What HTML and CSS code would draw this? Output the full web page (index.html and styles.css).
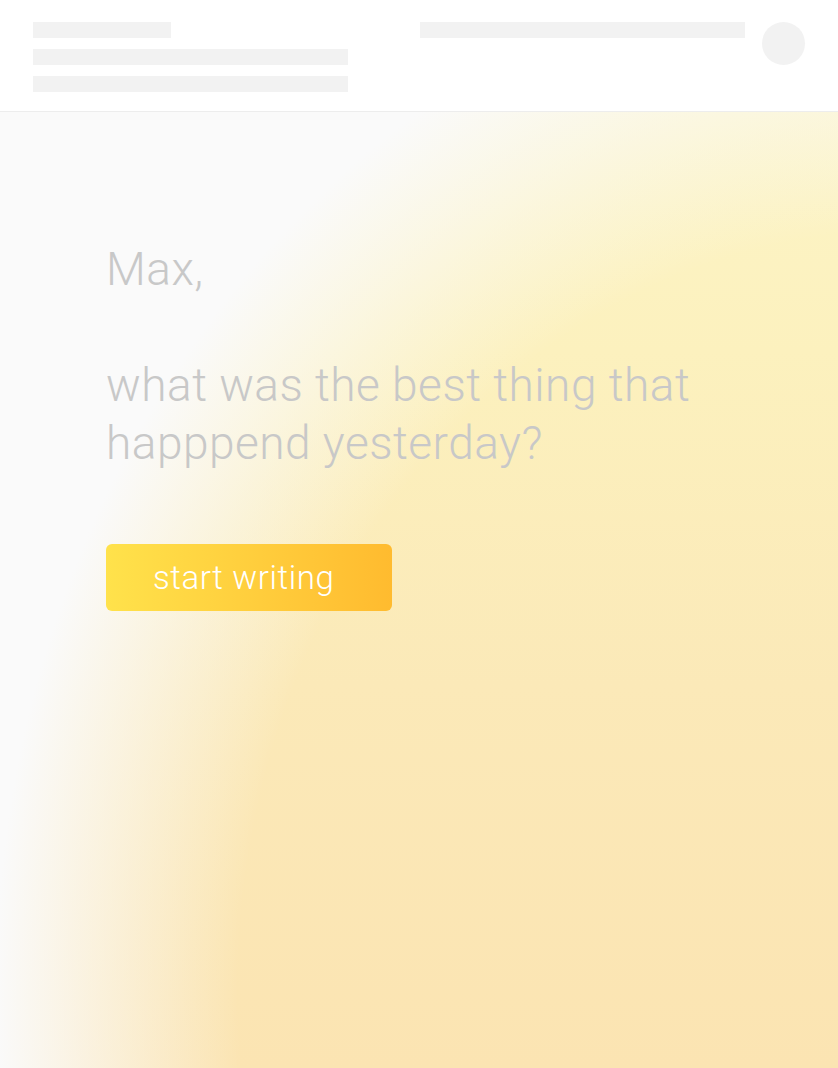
FILE: index.html
```html
<!DOCTYPE html>
<html lang="en">
<head>
<meta charset="utf-8">
<title>Journal</title>
<link rel="stylesheet" href="styles.css">
</head>
<body>
<header class="topbar">
  <div class="topbar-left">
    <div class="ph ph-short"></div>
    <div class="ph ph-long"></div>
    <div class="ph ph-long"></div>
  </div>
  <div class="topbar-right">
    <div class="ph ph-search"></div>
    <div class="avatar"></div>
  </div>
</header>
<main class="hero">
  <div class="hero-content">
    <p class="greeting">Max,</p>
    <p class="question">what was the best thing that<br>happpend yesterday?</p>
    <button class="cta" type="button">start writing</button>
  </div>
</main>
</body>
</html>
```
FILE: styles.css
```css
* { box-sizing: border-box; }
html, body { margin: 0; padding: 0; }
body {
  width: 838px;
  height: 1068px;
  overflow: hidden;
  font-family: Roboto, "Noto Sans", sans-serif;
  background: #fafafa;
}
.topbar {
  height: 112px;
  background: #ffffff;
  border-bottom: 1px solid #ededed;
  display: flex;
  justify-content: space-between;
  padding: 22px 33px 0 33px;
}
.topbar-left {
  display: flex;
  flex-direction: column;
  gap: 11px;
}
.ph {
  height: 16px;
  background: #f2f2f2;
}
.ph-short { width: 138px; }
.ph-long { width: 315px; }
.topbar-right {
  display: flex;
  gap: 17px;
  align-items: flex-start;
}
.ph-search { width: 325px; }
.avatar {
  width: 43px;
  height: 43px;
  border-radius: 50%;
  background: #f2f2f2;
}
.hero {
  height: 956px;
  background:
    radial-gradient(ellipse 870px 1000px at 900px 880px, rgba(250,250,250,0) 0%, rgba(250,250,250,0) 76%, rgba(250,250,250,1) 104%),
    linear-gradient(to bottom, #fcf4c6 0%, #fcf1be 25%, #fbe9b8 60%, #fbe4b2 100%);
  padding: 128px 0 0 106px;
}
.hero-content {
  display: flex;
  flex-direction: column;
  align-items: flex-start;
}
.greeting, .question {
  margin: 0;
  color: #c8c8c8;
  font-weight: 300;
  font-size: 46px;
  line-height: 58px;
  letter-spacing: 0.5px;
}
.question { margin-top: 58px; }
.cta {
  margin-top: 72px;
  width: 286px;
  height: 67px;
  border: none;
  border-radius: 6px;
  background: linear-gradient(to right, #ffe24b, #ffbb2f);
  color: #ffffff;
  font-family: Roboto, "Noto Sans", sans-serif;
  font-size: 33px;
  font-weight: 300;
  letter-spacing: 0.6px;
  text-align: left;
  padding: 0 0 0 47px;
}
```
